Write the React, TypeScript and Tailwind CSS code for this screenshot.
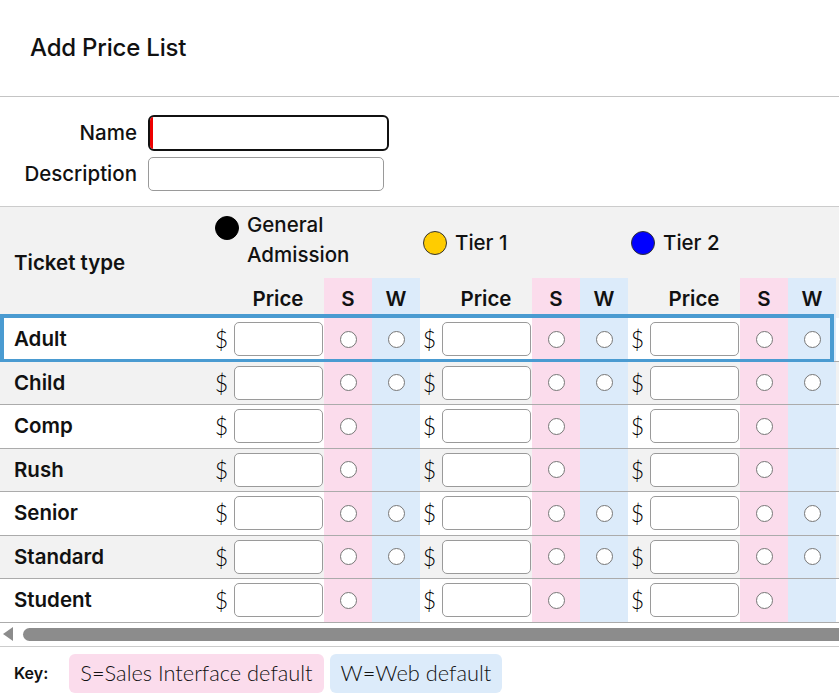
import React from "react";

const rows = [
  { name: "Adult", web: true },
  { name: "Child", web: true },
  { name: "Comp", web: false },
  { name: "Rush", web: false },
  { name: "Senior", web: true },
  { name: "Standard", web: true },
  { name: "Student", web: false },
];

const tiers = [
  { label: "General Admission", dot: "bg-black border-black" },
  { label: "Tier 1", dot: "bg-[#ffcc00] border-[#333]" },
  { label: "Tier 2", dot: "bg-[#0000ff] border-[#333]" },
];

function Radio() {
  return <span className="block h-[17px] w-[17px] rounded-full border border-[#777] bg-white" />;
}

function PriceGroup({ web }: { web: boolean }) {
  return (
    <div className="flex h-full w-[208px] shrink-0">
      <div
        className="flex w-[20px] items-center justify-end pr-[4px] text-[23px] font-light text-black"
        style={{ fontFamily: "Lato, sans-serif" }}
      >
        $
      </div>
      <div className="flex w-[92px] items-center justify-center">
        <div className="h-[34px] w-[89px] rounded-[5px] border border-[#9a9a9a] bg-white" />
      </div>
      <div className="flex w-[48px] items-center justify-center bg-[#fbdcec]">
        <Radio />
      </div>
      <div className="flex w-[48px] items-center justify-center bg-[#dcebfa]">{web && <Radio />}</div>
    </div>
  );
}

export default function App() {
  return (
    <div
      className="h-[700px] w-[839px] overflow-hidden bg-white text-[#111]"
      style={{ fontFamily: "Inter, 'Noto Sans', sans-serif" }}
    >
      <header className="flex h-[97px] items-center border-b border-[#c4c4c4] pl-[30px]">
        <h1 className="text-[24px] font-medium tracking-[-0.2px]">Add Price List</h1>
      </header>

      <div className="flex flex-col gap-[6px] pt-[18px] pb-[15px]">
        <div className="flex items-center">
          <label className="w-[137px] text-right text-[20.5px] font-medium">Name</label>
          <div className="ml-[11px] h-[36px] w-[241px] overflow-hidden rounded-[6px] border-2 border-[#111] bg-white">
            <div className="h-full w-[3px] bg-[#ee0000]" />
          </div>
        </div>
        <div className="flex items-center">
          <label className="w-[137px] text-right text-[20.5px] font-medium">Description</label>
          <div className="ml-[11px] h-[34px] w-[236px] rounded-[5px] border border-[#9a9a9a] bg-white" />
        </div>
      </div>

      <div className="overflow-hidden border-t border-[#cccccc]">
        <div className="w-[900px]">
          <div className="flex bg-[#f2f2f2]">
            <div className="flex w-[212px] shrink-0 items-center pl-[14px] pt-[1px] text-[20.5px] font-semibold">
              Ticket type
            </div>
            <div className="flex flex-col">
              <div className="flex h-[71px]">
                {tiers.map((t, i) => (
                  <div key={i} className="flex w-[208px] shrink-0 items-center pl-[3px]">
                    <div className={`flex gap-[8px] ${i === 0 ? "items-start" : "items-center"}`}>
                      <span className={`mt-[1px] block h-[24px] w-[24px] shrink-0 rounded-full border ${t.dot}`} />
                      <span className={`text-[20.5px] font-medium leading-[30px] ${i === 0 ? "-mt-[5px] w-[120px]" : ""}`}>
                        {t.label}
                      </span>
                    </div>
                  </div>
                ))}
              </div>
              <div className="flex h-[40px]">
                {tiers.map((_, i) => (
                  <div key={i} className="flex w-[208px] shrink-0 text-[20.5px] font-semibold">
                    <div className="w-[20px]" />
                    <div className="flex w-[92px] items-center justify-center pt-[2px]">Price</div>
                    <div className="flex w-[48px] items-center justify-center bg-[#fbdcec] pt-[2px]">S</div>
                    <div className="flex w-[48px] items-center justify-center bg-[#dcebfa] pt-[2px]">W</div>
                  </div>
                ))}
              </div>
            </div>
          </div>

          {rows.map((r, idx) => (
            <div
              key={r.name}
              className={`relative flex h-[43.5px] border-b border-[#ababab] ${idx % 2 === 0 ? "bg-white" : "bg-[#f2f2f2]"}`}
            >
              <div className="flex w-[212px] shrink-0 items-center pl-[14px] pt-[1px] text-[20.5px] font-semibold">
                {r.name}
              </div>
              {tiers.map((_, i) => (
                <PriceGroup key={i} web={r.web} />
              ))}
              {idx === 0 && (
                <div className="pointer-events-none absolute top-[-4px] bottom-[-2px] left-0 w-[834px] border-[4px] border-[#4a9bd1]" />
              )}
            </div>
          ))}
        </div>
      </div>

      <div className="flex h-[24px] items-center gap-[10px] border-b border-[#cccccc] bg-white pl-[3px]">
        <svg width="10" height="14" viewBox="0 0 10 14">
          <polygon points="10,0 10,14 0,7" fill="#8c8c8c" />
        </svg>
        <div className="h-[13px] flex-1 rounded-l-full bg-[#8c8c8c]" />
      </div>

      <div className="flex items-center gap-[6px] pt-[7px] pl-[14px]">
        <span className="mr-[15px] text-[16px] font-semibold">Key:</span>
        <span
          className="flex h-[39px] items-center rounded-[6px] bg-[#fbdcec] px-[11px] text-[21.8px] font-light"
          style={{ fontFamily: "Lato, sans-serif" }}
        >
          S=Sales Interface default
        </span>
        <span
          className="flex h-[39px] items-center rounded-[6px] bg-[#dcebfa] px-[11px] text-[21.8px] font-light"
          style={{ fontFamily: "Lato, sans-serif" }}
        >
          W=Web default
        </span>
      </div>
    </div>
  );
}
